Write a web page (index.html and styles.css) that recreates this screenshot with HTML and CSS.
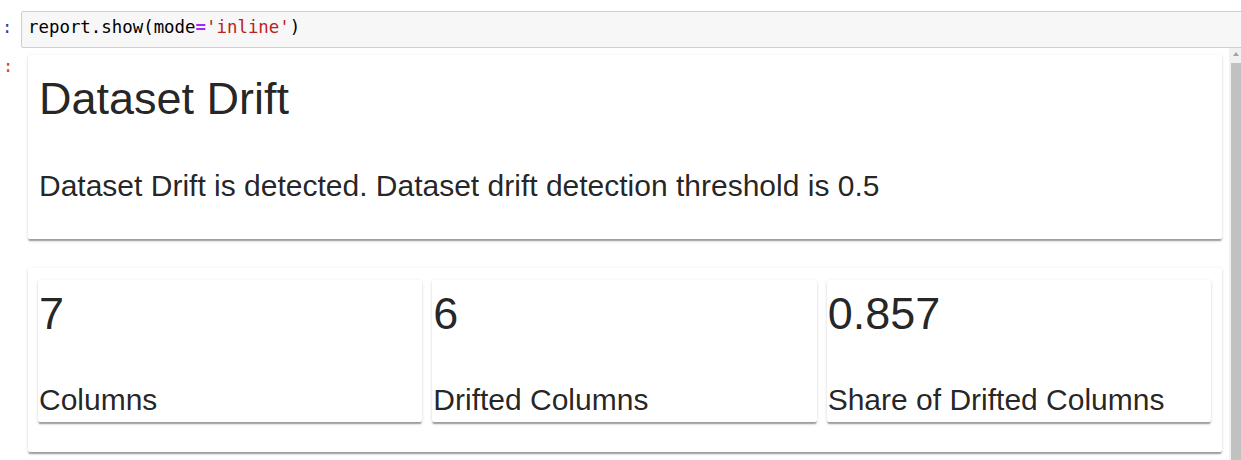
FILE: index.html
```html
<!DOCTYPE html>
<html>
<head>
<meta charset="utf-8">
<link rel="stylesheet" href="styles.css">
</head>
<body>
<div class="cell-in">
  <div class="prompt prompt-in">:</div>
  <div class="input"><span class="tok-n">report.show(mode</span><span class="tok-o">=</span><span class="tok-s">'inline'</span><span class="tok-n">)</span></div>
</div>
<div class="cell-out">
  <div class="prompt prompt-out">:</div>
  <div class="output">
    <div class="content">
      <div class="paper card-main">
        <div class="title">Dataset Drift</div>
        <div class="desc">Dataset Drift is detected. Dataset drift detection threshold is 0.5</div>
      </div>
      <div class="paper card-counters">
        <div class="counter paper">
          <div class="value">7</div>
          <div class="label">Columns</div>
        </div>
        <div class="counter paper">
          <div class="value">6</div>
          <div class="label">Drifted Columns</div>
        </div>
        <div class="counter paper">
          <div class="value">0.857</div>
          <div class="label">Share of Drifted Columns</div>
        </div>
      </div>
    </div>
    <div class="scrollbar">
      <div class="arrow"></div>
      <div class="thumb"></div>
    </div>
  </div>
</div>
</body>
</html>
```
FILE: styles.css
```css
html, body {
  margin: 0;
  padding: 0;
  background: #fff;
  overflow: hidden;
  width: 1241px;
  height: 460px;
}
body {
  font-family: "Liberation Sans", Arial, sans-serif;
  color: rgba(0, 0, 0, 0.87);
}
.cell-in {
  display: flex;
  padding-top: 11px;
}
.prompt {
  width: 19px;
  padding-left: 2px;
  flex: none;
  font-family: "DejaVu Sans Mono", monospace;
  font-size: 17px;
  line-height: 30px;
}
.prompt-in {
  color: #303f9f;
  padding-top: 1px;
}
.prompt-out {
  color: #d84315;
  padding-top: 3px;
  padding-left: 3px;
  width: 18px;
}
.input {
  flex: none;
  width: 1240px;
  height: 30px;
  padding: 0 0 5px 6px;
  background: #f7f7f7;
  border: 1px solid #cfcfcf;
  border-radius: 2px;
  font-family: "DejaVu Sans Mono", monospace;
  font-size: 17.4px;
  line-height: 30px;
  white-space: pre;
  color: #000;
}
.tok-o { color: #aa22ff; font-weight: bold; }
.tok-s { color: #ba2121; }
.cell-out {
  display: flex;
}
.output {
  flex: 1;
  display: flex;
  height: 412px;
}
.content {
  flex: 1;
  padding: 7px 7px 0 7px;
}
.paper {
  background: #fff;
  border-radius: 2px;
  box-shadow: 0 2.5px 1.25px -1.25px rgba(0,0,0,0.2),
              0 1.25px 1.25px 0 rgba(0,0,0,0.14),
              0 1.25px 3.75px 0 rgba(0,0,0,0.12);
}
.card-main {
  padding: 17px 10px 35px 11px;
}
.title {
  font-size: 45px;
  line-height: 54px;
}
.desc {
  margin-top: 42px;
  font-size: 30px;
  line-height: 36px;
}
.card-counters {
  margin-top: 29px;
  padding: 12px 11px 30px 10px;
  display: grid;
  grid-template-columns: 1fr 1fr 1fr;
  column-gap: 10px;
}
.counter {
  height: 135px;
  padding: 7px 1px 0 1px;
}
.value {
  font-size: 45px;
  line-height: 54px;
}
.label {
  margin-top: 41px;
  font-size: 30px;
  line-height: 36px;
  white-space: nowrap;
}
.scrollbar {
  flex: none;
  width: 12px;
  background: #f1f1f1;
  position: relative;
}
.arrow {
  position: absolute;
  left: 4px;
  top: 4px;
  width: 0;
  height: 0;
  border-left: 3.5px solid transparent;
  border-right: 3.5px solid transparent;
  border-bottom: 4px solid #a3a3a3;
}
.thumb {
  position: absolute;
  left: 2px;
  right: 0;
  top: 15px;
  bottom: 0;
  background: #c1c1c1;
}
```
